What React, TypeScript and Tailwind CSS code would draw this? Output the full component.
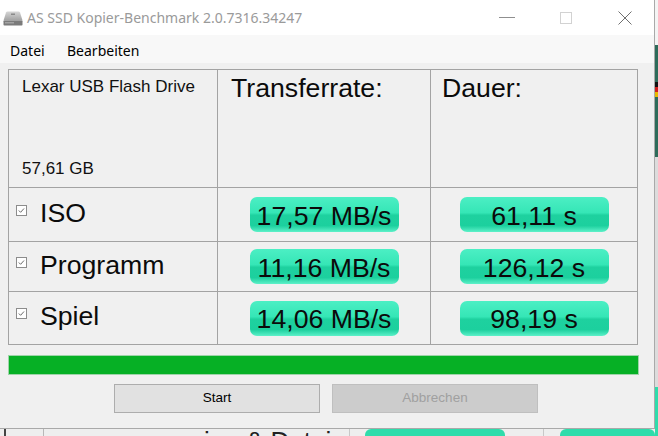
import React from "react";

function Pill({ text }: { text: string }) {
  return (
    <div className="w-[149px] h-[35px] rounded-[7px] flex items-center justify-center pt-[3px] bg-[linear-gradient(to_bottom,#4cefc4_0%,#35e6b6_45%,#1ed19f_52%,#1cd09e_82%,#5df1c9_100%)] text-[#0b0b0b] text-[26.67px] leading-none font-['Liberation_Sans',Arial,sans-serif]">
      {text}
    </div>
  );
}

function CheckBox() {
  return (
    <div className="w-[11px] h-[11px] border border-[#8c8c8c] bg-white mb-[6px] flex items-center justify-center">
      <svg width="9" height="9" viewBox="0 0 9 9">
        <polyline points="1.8,4.5 3.6,6.3 7,2.5" fill="none" stroke="#6a6a6a" strokeWidth="1" />
      </svg>
    </div>
  );
}

const rows = [
  { label: "ISO", rate: "17,57 MB/s", time: "61,11 s", h: "h-[53px]" },
  { label: "Programm", rate: "11,16 MB/s", time: "126,12 s", h: "h-[49px]" },
  { label: "Spiel", rate: "14,06 MB/s", time: "98,19 s", h: "h-[52px]" },
];

export default function App() {
  return (
    <div className="relative w-[658px] h-[436px] overflow-hidden bg-[#f2f2f2] font-['Liberation_Sans',Arial,sans-serif]">
      {/* desktop behind the window: bottom strip */}
      <div className="absolute left-0 top-[429px] w-[658px] h-[7px] bg-[#eeeeee]">
        <div className="absolute left-[4px] top-0 w-[2px] h-[7px] bg-[#444]" />
        <div className="absolute left-[43px] top-0 w-[1px] h-[7px] bg-[#b8b8b8]" />
        <div className="absolute left-[349px] top-0 w-[1px] h-[7px] bg-[#c8c8c8]" />
        <div className="absolute left-[543px] top-0 w-[1px] h-[7px] bg-[#c8c8c8]" />
        <div className="absolute left-[365px] top-0 w-[140px] h-[14px] rounded-[6px] bg-[#2fdcab]" />
        <div className="absolute left-[560px] top-0 w-[95px] h-[14px] rounded-[6px] bg-[#2fdcab]" />
        <div className="absolute left-[204px] top-[-1px] text-[26px] leading-none text-[#222] whitespace-nowrap">
          ien &amp; Datei
        </div>
      </div>
      {/* desktop behind the window: right strip */}
      <div className="absolute left-[655px] top-0 w-[3px] h-[436px] flex flex-col">
        <div className="h-[45px] bg-[#f4f4f4]" />
        <div className="h-[37px] bg-[#2e6b5a]" />
        <div className="h-[5px] bg-[#111]" />
        <div className="h-[5px] bg-[#d01d1d]" />
        <div className="h-[5px] bg-[#e8b800]" />
        <div className="h-[60px] bg-[#2e6b5a]" />
        <div className="h-[230px] bg-[#dcdcdc]" />
        <div className="flex-1 bg-[#2fdcab]" />
      </div>

      {/* window */}
      <div className="absolute left-0 top-0 w-[655px] h-[429px] bg-[#f0f0f0] border-r border-b border-[#a9a9a9] flex flex-col">
        {/* title bar */}
        <div className="h-[35px] bg-white flex items-center shrink-0">
          <div className="ml-[3px] mt-[1px]">
            <svg width="20" height="15" viewBox="0 0 20 15">
              <defs>
                <linearGradient id="drv" x1="0" y1="0" x2="0" y2="1">
                  <stop offset="0" stopColor="#d6d6d6" />
                  <stop offset="1" stopColor="#a2a2a2" />
                </linearGradient>
              </defs>
              <path d="M4.5 0.5 H15.5 Q16.5 0.5 17 1.5 L19.5 9.5 H0.5 L3 1.5 Q3.5 0.5 4.5 0.5 Z" fill="url(#drv)" />
              <rect x="0.5" y="9.5" width="19" height="5" rx="0.8" fill="#7b7b7b" />
              <rect x="2" y="11" width="9" height="1.5" fill="#a4a4a4" />
              <rect x="8" y="2.5" width="4" height="1.5" fill="#8a8a8a" />
            </svg>
          </div>
          <span className="ml-[4px] text-[14px] text-[#9a9a9a] font-['Noto_Sans',sans-serif] whitespace-nowrap">
            AS SSD Kopier-Benchmark 2.0.7316.34247
          </span>
          <div className="ml-auto flex h-full">
            <div className="w-[59px] h-full flex items-center justify-center">
              <div className="w-[16px] h-[1px] bg-[#8f8f8f]" />
            </div>
            <div className="w-[59px] h-full flex items-center justify-center">
              <div className="w-[12px] h-[12px] border border-[#d2d2d2]" />
            </div>
            <div className="w-[59px] h-full flex items-center justify-center">
              <svg width="14" height="14" viewBox="0 0 14 14">
                <path d="M0.5 0.5 L13.5 13.5 M13.5 0.5 L0.5 13.5" stroke="#6f6f6f" strokeWidth="1" />
              </svg>
            </div>
          </div>
        </div>

        {/* menu bar */}
        <div className="h-[28px] bg-[#f8f8f8] flex items-center pl-[10px] pt-[2px] text-[14px] text-black font-['Noto_Sans',sans-serif] shrink-0">
          <span className="w-[57px]">Datei</span>
          <span>Bearbeiten</span>
        </div>

        {/* table */}
        <div className="ml-[8px] mt-[6px] w-[630px] grid grid-cols-[208px_212px_206px] gap-px p-px bg-[#a3a3a3]">
          <div className="h-[117px] bg-[#f0f0f0] flex flex-col justify-between pl-[13px] pt-[8px] pb-[10px] text-[17px] leading-none text-[#111]">
            <span>Lexar USB Flash Drive</span>
            <span>57,61 GB</span>
          </div>
          <div className="h-[117px] bg-[#f0f0f0] pl-[13px] pt-[5px] text-[26.67px] leading-none text-[#0b0b0b]">
            Transferrate:
          </div>
          <div className="h-[117px] bg-[#f0f0f0] pl-[11px] pt-[5px] text-[26.67px] leading-none text-[#0b0b0b]">
            Dauer:
          </div>
          {rows.map((r) => (
            <React.Fragment key={r.label}>
              <div className={`${r.h} bg-[#f0f0f0] flex items-center pl-[7px] pb-[3px]`}>
                <CheckBox />
                <span className="ml-[13px] text-[26.67px] leading-none text-[#0b0b0b]">{r.label}</span>
              </div>
              <div className={`${r.h} bg-[#f0f0f0] flex items-center justify-center`}>
                <Pill text={r.rate} />
              </div>
              <div className={`${r.h} bg-[#f0f0f0] flex items-center justify-center`}>
                <Pill text={r.time} />
              </div>
            </React.Fragment>
          ))}
        </div>

        {/* progress bar */}
        <div className="ml-[8px] mt-[10px] w-[631px] h-[20px] border border-[#9fd4a9] bg-[#06b025]" />

        {/* buttons */}
        <div className="mt-[9px] ml-[114px] flex gap-[12px]">
          <div className="w-[206px] h-[29px] bg-[#e1e1e1] border border-[#adadad] flex items-center justify-center text-[13.5px] text-black">
            Start
          </div>
          <div className="w-[206px] h-[29px] bg-[#cccccc] border border-[#bfbfbf] flex items-center justify-center text-[13.5px] text-[#a0a0a0]">
            Abbrechen
          </div>
        </div>
      </div>
    </div>
  );
}
